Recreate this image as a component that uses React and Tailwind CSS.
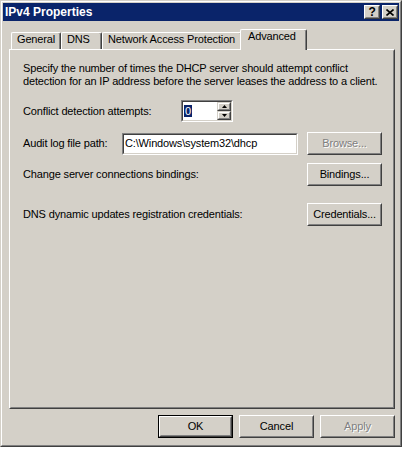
import React from "react";

function Raised({ children, className = "", disabled = false }) {
  return (
    <div
      className={`border border-t-white border-l-white border-r-[#404040] border-b-[#404040] bg-[#D4D0C8] ${className}`}
    >
      <div className="w-full h-full border border-t-[#D4D0C8] border-l-[#D4D0C8] border-r-[#808080] border-b-[#808080] flex items-center justify-center">
        <span
          className={
            disabled
              ? "text-[#808080] [text-shadow:1px_1px_0_#ffffff]"
              : "text-black"
          }
        >
          {children}
        </span>
      </div>
    </div>
  );
}

function Sunken({ children, className = "" }) {
  return (
    <div
      className={`border border-t-[#808080] border-l-[#808080] border-r-white border-b-white ${className}`}
    >
      <div className="w-full h-full border border-t-[#404040] border-l-[#404040] border-r-[#D4D0C8] border-b-[#D4D0C8] bg-white flex items-center">
        {children}
      </div>
    </div>
  );
}

function SpinHalf({ up }) {
  return (
    <div className="h-[9px] w-[14px] border border-t-[#D4D0C8] border-l-[#D4D0C8] border-r-[#404040] border-b-[#404040] bg-[#D4D0C8]">
      <div className="w-full h-full border border-t-white border-l-white border-r-[#808080] border-b-[#808080] flex items-center justify-center">
        <svg width="5" height="3" viewBox="0 0 5 3">
          {up ? (
            <path d="M2.5 0 L5 3 L0 3 Z" fill="#000" />
          ) : (
            <path d="M0 0 L5 0 L2.5 3 Z" fill="#000" />
          )}
        </svg>
      </div>
    </div>
  );
}

function Tab({ label, width }) {
  return (
    <div
      className={`h-[17px] ${width} border-t border-l border-r border-t-white border-l-white border-r-[#404040] rounded-tl-[2px] rounded-tr-[2px] shadow-[inset_-1px_0_0_#808080] pl-[5px] leading-[13px] whitespace-nowrap`}
    >
      {label}
    </div>
  );
}

export default function App() {
  return (
    <div className="w-[406px] h-[449px] bg-white flex font-['Liberation_Sans',Arial,sans-serif] text-[11px] leading-[13px] tracking-[-0.15px] text-black overflow-hidden whitespace-nowrap">
      <div className="w-[402px] h-[447px] shrink-0 border border-t-[#D4D0C8] border-l-[#D4D0C8] border-r-[#404040] border-b-[#404040]">
        <div className="h-full border border-t-white border-l-white border-r-[#808080] border-b-[#808080] bg-[#D4D0C8] p-px flex flex-col">
          {/* title bar */}
          <div className="h-[18px] bg-[#0A246A] flex items-center pl-[2px] pr-[1px]">
            <span className="text-white font-bold text-[12px] leading-[14px] tracking-normal">
              IPv4 Properties
            </span>
            <div className="ml-auto flex gap-[2px]">
              <Raised className="w-[16px] h-[14px]">
                <span className="font-bold text-[12px] leading-[12px]">?</span>
              </Raised>
              <Raised className="w-[16px] h-[14px]">
                <svg width="8" height="7" viewBox="0 0 8 7">
                  <path d="M0.5 0.5 L7.5 6.5 M7.5 0.5 L0.5 6.5" stroke="#000" strokeWidth="1.6" />
                </svg>
              </Raised>
            </div>
          </div>

          {/* tabs */}
          <div className="mt-[8px] ml-[8px] h-[20px] flex items-end">
            <Tab label="General" width="w-[50px]" />
            <Tab label="DNS" width="w-[41px]" />
            <Tab label="Network Access Protection" width="w-[140px]" />
            <div className="relative z-10 -ml-[2px] -mb-px h-[21px] w-[67px] bg-[#D4D0C8] border-t border-l border-r border-t-white border-l-white border-r-[#404040] rounded-tl-[2px] rounded-tr-[2px] shadow-[inset_-1px_0_0_#808080] pl-[7px] leading-[13px]">
              Advanced
            </div>
          </div>

          {/* panel */}
          <div className="ml-[6px] w-[386px] h-[360px] border border-t-white border-l-white border-r-[#404040] border-b-[#404040]">
            <div className="h-full border border-t-[#D4D0C8] border-l-[#D4D0C8] border-r-[#808080] border-b-[#808080] pt-[11px] pl-[12px] pr-[11px] flex flex-col">
              <p>
                Specify the number of times the DHCP server should attempt conflict
                <br />
                detection for an IP address before the server leases the address to a client.
              </p>

              <div className="mt-[12px] h-[22px] flex items-center">
                <span className="w-[158px]">Conflict detection attempts:</span>
                <Sunken className="w-[52px] h-[22px]">
                  <div className="flex-1 pl-[1px]">
                    <span className="bg-[#0A246A] text-white px-px">0</span>
                  </div>
                  <div className="flex flex-col">
                    <SpinHalf up />
                    <SpinHalf />
                  </div>
                </Sunken>
              </div>

              <div className="mt-[10px] h-[23px] flex items-center">
                <span className="w-[99px]">Audit log file path:</span>
                <Sunken className="w-[176px] h-[22px]">
                  <span className="pl-[1px]">{"C:\\Windows\\system32\\dhcp"}</span>
                </Sunken>
                <Raised className="ml-auto w-[75px] h-[23px]" disabled>
                  Browse...
                </Raised>
              </div>

              <div className="mt-[8px] h-[23px] flex items-center">
                <span>Change server connections bindings:</span>
                <Raised className="ml-auto w-[75px] h-[23px]">Bindings...</Raised>
              </div>

              <div className="mt-[17px] h-[23px] flex items-center">
                <span>DNS dynamic updates registration credentials:</span>
                <Raised className="ml-auto w-[75px] h-[23px]">Credentials...</Raised>
              </div>
            </div>
          </div>

          {/* dialog buttons */}
          <div className="ml-[6px] w-[386px] mt-[6px] flex justify-end gap-[6px]">
            <div className="border border-black">
              <Raised className="w-[73px] h-[21px]">OK</Raised>
            </div>
            <Raised className="w-[75px] h-[23px]">Cancel</Raised>
            <Raised className="w-[75px] h-[23px]" disabled>
              Apply
            </Raised>
          </div>
        </div>
      </div>
    </div>
  );
}
